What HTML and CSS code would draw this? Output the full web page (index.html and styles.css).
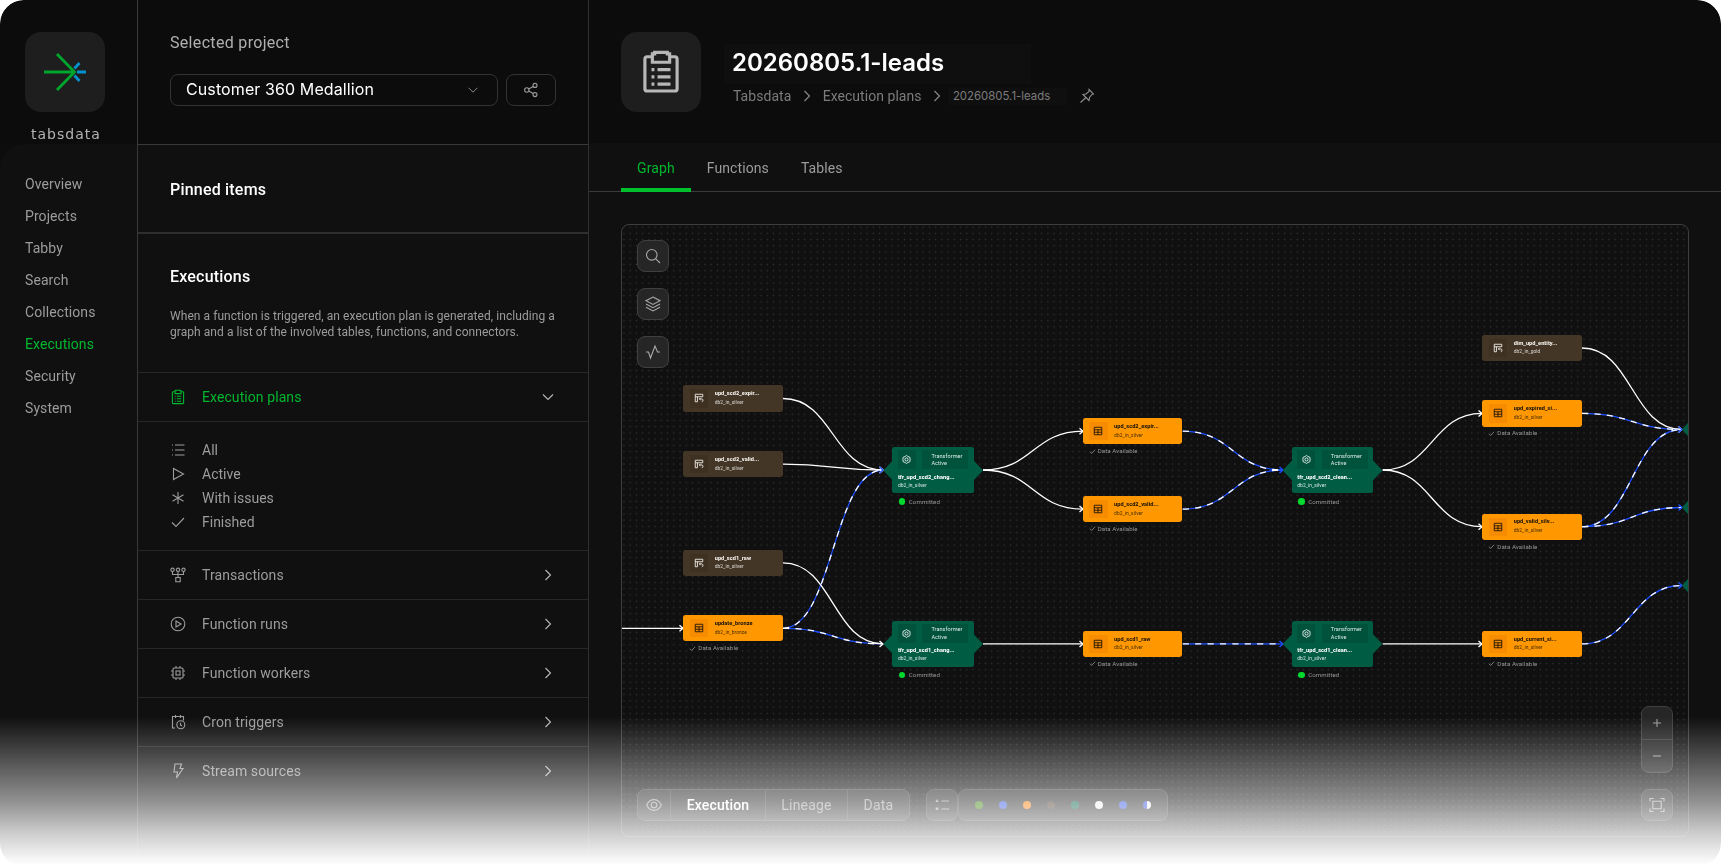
FILE: index.html
```html
<!DOCTYPE html>
<html lang="en">
<head>
  <meta charset="UTF-8" />
  <meta name="viewport" content="width=device-width, initial-scale=1.0"/>
  <title>Tabsdata - Execution plan</title>
  <link rel="stylesheet" href="styles.css">
</head>
<body>

  <!-- Icon set -->
  <svg class="icon-set" width="0" height="0">
    <symbol id="i-down" viewBox="0 0 16 16"><path d="M3 5.5l5 5 5-5"/></symbol>
    <symbol id="i-right" viewBox="0 0 16 16"><path d="M5.5 3l5 5-5 5"/></symbol>
    <symbol id="i-clipboard" viewBox="0 0 16 16"><path d="M5 2.700H3.200a.8.8 0 0 0-.8.8v10.300a.8.8 0 0 0 .8.8h9.600a.8.8 0 0 0 .8-.8V3.500a.8.8 0 0 0-.8-.8H11M5.800 1.200h4.400v.500h.800v2.900H5V1.700h.800zM4.700 7.200h1M6.800 7.200h4.500M4.700 9.700h1M6.800 9.700h4.500M4.700 12.200h1M6.800 12.200h4.500"/></symbol>
    <symbol id="i-list" viewBox="0 0 16 16"><path d="M2 3h1M5 3h9.500M2 8h1M5 8h9.500M2 13h1M5 13h9.500"/></symbol>
    <symbol id="i-play" viewBox="0 0 16 16"><path d="M3.500 2.500v11l10-5.500z"/></symbol>
    <symbol id="i-asterisk" viewBox="0 0 16 16"><path d="M8 2v12M2.500 4.800l11 6.400M2.500 11.200l11-6.400"/></symbol>
    <symbol id="i-check" viewBox="0 0 16 16"><path d="M2 8.500l4 4 8-8.500"/></symbol>
    <symbol id="i-fork" viewBox="0 0 16 16"><circle cx="2.500" cy="2.800" r="1.700"/><circle cx="8" cy="2.800" r="1.700"/><circle cx="13.500" cy="2.800" r="1.700"/><path d="M2.500 4.500v3h11v-3M8 4.500v6M5.800 10.500h4.400v4.300H5.800z"/></symbol>
    <symbol id="i-run" viewBox="0 0 16 16"><circle cx="8" cy="8" r="6.800"/><path d="M6 5v6l5-3z"/></symbol>
    <symbol id="i-chip" viewBox="0 0 16 16"><rect x="3" y="3" width="10" height="10" rx="1"/><rect x="6" y="6" width="4" height="4"/><path d="M6 1v2M10 1v2M6 13v2M10 13v2M1 6h2M1 10h2M13 6h2M13 10h2"/></symbol>
    <symbol id="i-cron" viewBox="0 0 16 16"><path d="M5 14H2.500V2.500h11v4M5.500 1v3M10.500 1v3M10.500 8.800v2.200l1.500 1"/><circle cx="10.800" cy="10.800" r="4"/></symbol>
    <symbol id="i-bolt" viewBox="0 0 16 16"><path d="M5 1h6.500L10 5.500h3L6.500 15l1-6H4z"/></symbol>
    <symbol id="i-share" viewBox="0 0 16 16"><circle cx="3.800" cy="8" r="2.200"/><circle cx="12" cy="3.400" r="2"/><circle cx="12" cy="12.600" r="2"/><path d="M5.700 7l4.500-2.600M5.700 9l4.500 2.600"/></symbol>
    <symbol id="i-pin" viewBox="0 0 16 16"><path d="M10 1.500l4.500 4.500-1.500.500-2.500 3-.500 3L4 6.500l3-.500 3-2.500zM7 9.500L1.500 14.500"/></symbol>
    <symbol id="i-search" viewBox="0 0 16 16"><circle cx="6.800" cy="6.800" r="5.300"/><path d="M10.600 10.600L15 15"/></symbol>
    <symbol id="i-layers" viewBox="0 0 16 16"><path d="M8 1l7 3.700-7 3.700-7-3.700zM1 8l7 3.700L15 8M1 11.300L8 15l7-3.700"/></symbol>
    <symbol id="i-activity" viewBox="0 0 16 16"><path d="M1 8h2.500l2 6 4.500-12 2.500 6H15"/></symbol>
    <symbol id="i-plus" viewBox="0 0 16 16"><path d="M8 4v8M4 8h8"/></symbol>
    <symbol id="i-minus" viewBox="0 0 16 16"><path d="M4 8h8"/></symbol>
    <symbol id="i-fit" viewBox="0 0 16 16"><path d="M1 4.500V1.500h3.500M11.500 1.500H15v3M15 11.500v3h-3.500M4.500 14.500H1v-3M3.800 4.300h8.400v7.400H3.800z"/></symbol>
    <symbol id="i-eye" viewBox="0 0 16 16"><path d="M.700 8C4 .800 12 .800 15.300 8 12 15.200 4 15.200.700 8z"/><circle cx="8" cy="8" r="2.800"/></symbol>
    <symbol id="i-legend" viewBox="0 0 16 16"><path d="M7.500 4H15M7.500 12H15"/><path class="solid" d="M3 2l1.700 3H1.300zM1.700 10.500h2.600v2.600H1.700z"/></symbol>
    <symbol id="i-table" viewBox="0 0 16 16"><path d="M2 2h12v12H2zM2 6h12M2 10h12M8 6v8"/></symbol>
    <symbol id="i-source" viewBox="0 0 16 16"><path d="M5.500 14H2V2h12v4M2 6h12M5.500 6v8M9 9.500h3.500c2.500 0 2.500 4.500 0 4.500M10.500 7.500l-2 2 2 2"/></symbol>
    <symbol id="i-hex" viewBox="0 0 16 16"><path d="M8 .8l2.200 1.700 3.900 1.700.3 3.800-.3 3.800-3.900 1.700L8 15.200l-2.200-1.700-3.900-1.700L1.600 8l.3-3.800 3.900-1.700z"/><circle cx="8" cy="8" r="2.800"/></symbol>
  </svg>

  <div class="app">

    <!-- Main navigation -->
    <aside class="sidebar">
      <div class="brand">
        <div class="tile">
          <svg width="80" height="80" viewBox="0 0 80 80" fill="none" stroke-width="2.800">
            <path d="M19 40h30M32 22l17.500 18L32 58" stroke="#00a52e"/>
            <path d="M49.500 36.500l5-5.500M52 40h9M49.500 43.500l5 5.500" stroke="#0093cf"/>
          </svg>
        </div>
        <span class="brand-name">tabsdata</span>
      </div>
      <nav class="menu">
        <a>Overview</a>
        <a>Projects</a>
        <a>Tabby</a>
        <a>Search</a>
        <a>Collections</a>
        <a class="active">Executions</a>
        <a>Security</a>
        <a>System</a>
      </nav>
    </aside>

    <!-- Project panel -->
    <section class="panel">
      <div class="project">
        <div class="project-label">Selected project</div>
        <div class="project-row">
          <div class="select"><span>Customer 360 Medallion</span><svg class="icon"><use href="#i-down"/></svg></div>
          <div class="share"><svg class="icon"><use href="#i-share"/></svg></div>
        </div>
      </div>
      <div class="pinned"><h2>Pinned items</h2></div>
      <div class="intro">
        <h2>Executions</h2>
        <p>When a function is triggered, an execution plan is generated, including a<br>graph and a list of the involved tables, functions, and connectors.</p>
      </div>
      <div class="row open"><svg class="icon"><use href="#i-clipboard"/></svg><span>Execution plans</span><svg class="icon arrow"><use href="#i-down"/></svg></div>
      <ul class="filters">
        <li><svg class="icon"><use href="#i-list"/></svg>All</li>
        <li><svg class="icon"><use href="#i-play"/></svg>Active</li>
        <li><svg class="icon"><use href="#i-asterisk"/></svg>With issues</li>
        <li><svg class="icon"><use href="#i-check"/></svg>Finished</li>
      </ul>
      <div class="row"><svg class="icon"><use href="#i-fork"/></svg><span>Transactions</span><svg class="icon arrow"><use href="#i-right"/></svg></div>
      <div class="row"><svg class="icon"><use href="#i-run"/></svg><span>Function runs</span><svg class="icon arrow"><use href="#i-right"/></svg></div>
      <div class="row"><svg class="icon"><use href="#i-chip"/></svg><span>Function workers</span><svg class="icon arrow"><use href="#i-right"/></svg></div>
      <div class="row"><svg class="icon"><use href="#i-cron"/></svg><span>Cron triggers</span><svg class="icon arrow"><use href="#i-right"/></svg></div>
      <div class="row"><svg class="icon"><use href="#i-bolt"/></svg><span>Stream sources</span><svg class="icon arrow"><use href="#i-right"/></svg></div>
    </section>

    <!-- Content -->
    <main class="content">
      <header class="page-header">
        <div class="tile"><svg class="icon"><use href="#i-clipboard"/></svg></div>
        <div class="heading">
          <h1>20260805.1-leads</h1>
          <div class="crumbs">
            <span>Tabsdata</span>
            <svg class="icon"><use href="#i-right"/></svg>
            <span>Execution plans</span>
            <svg class="icon"><use href="#i-right"/></svg>
            <span class="current">20260805.1-leads</span>
            <svg class="icon pin"><use href="#i-pin"/></svg>
          </div>
        </div>
      </header>

      <div class="tabs">
        <a class="tab active">Graph</a>
        <a class="tab">Functions</a>
        <a class="tab">Tables</a>
      </div>

      <div class="canvas">
        <!-- Edges -->
        <svg class="edges" width="1066" height="610" viewBox="0 0 1066 610">
          <defs>
            <marker id="head" markerUnits="userSpaceOnUse" markerWidth="8" markerHeight="8" refX="5" refY="4" orient="auto"><path d="M1.500 1L5 4 1.500 7" fill="none" stroke="#fff" stroke-width="1.300"/></marker>
            <marker id="head-blue" markerUnits="userSpaceOnUse" markerWidth="8" markerHeight="8" refX="5" refY="4" orient="auto"><path d="M1.500 1L5 4 1.500 7" fill="none" stroke="#1d4fff" stroke-width="1.300"/></marker>
            <path id="e1" d="M161 403.300C211 403.300 211 245 261 245"/>
            <path id="e2" d="M161 403.300C211 403.300 211 418.900 261 418.900"/>
            <path id="e3" d="M560.700 206.200C611 206.200 611 245 661 245"/>
            <path id="e4" d="M560.700 284.100C611 284.100 611 245 661 245"/>
            <path id="e5" d="M560.700 418.900H661"/>
            <path id="e6" d="M960 188.400C1010 188.400 1010 204.500 1060 204.500"/>
            <path id="e7" d="M960 301.700C1010 301.700 1010 204.500 1060 204.500"/>
            <path id="e8" d="M960 301.700C1010 301.700 1010 282.500 1060 282.500"/>
            <path id="e9" d="M960 418.900C1010 418.900 1010 360.500 1060 360.500"/>
          </defs>
          <g class="edge blue">
            <use href="#e1"/><use href="#e2"/><use href="#e3"/><use href="#e4"/><use href="#e5"/><use href="#e6"/><use href="#e7"/><use href="#e8"/><use href="#e9"/>
          </g>
          <g class="edge dashed">
            <use href="#e1"/><use href="#e2"/><use href="#e3"/><use href="#e4"/><use href="#e5"/><use href="#e6"/><use href="#e7"/><use href="#e8"/><use href="#e9"/>
          </g>
          <g class="edge" marker-end="url(#head)">
            <path d="M0 403.300H61"/>
            <path d="M161 173.500C211 173.500 211 245 261 245"/>
            <path d="M161 239.200C211 239.200 211 245 261 245"/>
            <path d="M161 337.900C211 337.900 211 418.900 261 418.900"/>
            <path d="M361 245C411 245 411 206.200 461 206.200"/>
            <path d="M361 245C411 245 411 284.100 461 284.100"/>
            <path d="M361 418.900H461"/>
            <path d="M760.700 245C810 245 810 188.400 860 188.400"/>
            <path d="M760.700 245C810 245 810 301.700 860 301.700"/>
            <path d="M760.700 418.900H860"/>
            <path d="M960 123C1010 123 1010 204.500 1060 204.500"/>
          </g>
          <g fill="none" marker-end="url(#head-blue)">
            <path d="M260 245h1"/><path d="M660 245h1"/><path d="M660 418.900h1"/><path d="M1059 204.500h1"/><path d="M1059 282.500h1"/><path d="M1059 360.500h1"/>
          </g>
          <path d="M1060 204.500l7-8v16zM1060 282.500l7-8v16zM1060 360.500l7-8v16z" fill="#005c43"/>
        </svg>

        <!-- Nodes -->
        <div class="node source" id="n1"><i><svg class="icon"><use href="#i-source"/></svg></i><div><b>upd_scd2_expir...</b><small>db2_in_silver</small></div></div>
        <div class="node source" id="n2"><i><svg class="icon"><use href="#i-source"/></svg></i><div><b>upd_scd2_valid...</b><small>db2_in_silver</small></div></div>
        <div class="node source" id="n3"><i><svg class="icon"><use href="#i-source"/></svg></i><div><b>upd_scd1_raw</b><small>db2_in_silver</small></div></div>
        <div class="node table" id="n4"><i><svg class="icon"><use href="#i-table"/></svg></i><div><b>update_bronze</b><small>db2_in_bronze</small></div><span class="state"><svg class="icon"><use href="#i-check"/></svg>Data Available</span></div>

        <div class="transformer" id="t1">
          <div class="kind"><i><svg class="icon"><use href="#i-hex"/></svg></i><p>Transformer<br>Active</p></div>
          <b>tfr_upd_scd2_chang...</b><small>db2_in_silver</small>
          <span class="state">Committed</span>
        </div>
        <div class="transformer" id="t2">
          <div class="kind"><i><svg class="icon"><use href="#i-hex"/></svg></i><p>Transformer<br>Active</p></div>
          <b>tfr_upd_scd1_chang...</b><small>db2_in_silver</small>
          <span class="state">Committed</span>
        </div>

        <div class="node table" id="n5"><i><svg class="icon"><use href="#i-table"/></svg></i><div><b>upd_scd2_expir...</b><small>db2_in_silver</small></div><span class="state"><svg class="icon"><use href="#i-check"/></svg>Data Available</span></div>
        <div class="node table" id="n6"><i><svg class="icon"><use href="#i-table"/></svg></i><div><b>upd_scd2_valid...</b><small>db2_in_silver</small></div><span class="state"><svg class="icon"><use href="#i-check"/></svg>Data Available</span></div>
        <div class="node table" id="n7"><i><svg class="icon"><use href="#i-table"/></svg></i><div><b>upd_scd1_raw</b><small>db2_in_silver</small></div><span class="state"><svg class="icon"><use href="#i-check"/></svg>Data Available</span></div>

        <div class="transformer" id="t3">
          <div class="kind"><i><svg class="icon"><use href="#i-hex"/></svg></i><p>Transformer<br>Active</p></div>
          <b>tfr_upd_scd2_clean...</b><small>db2_in_silver</small>
          <span class="state">Committed</span>
        </div>
        <div class="transformer" id="t4">
          <div class="kind"><i><svg class="icon"><use href="#i-hex"/></svg></i><p>Transformer<br>Active</p></div>
          <b>tfr_upd_scd1_clean...</b><small>db2_in_silver</small>
          <span class="state">Committed</span>
        </div>

        <div class="node source" id="n8"><i><svg class="icon"><use href="#i-source"/></svg></i><div><b>dim_upd_entity...</b><small>db2_in_gold</small></div></div>
        <div class="node table" id="n9"><i><svg class="icon"><use href="#i-table"/></svg></i><div><b>upd_expired_si...</b><small>db2_in_silver</small></div><span class="state"><svg class="icon"><use href="#i-check"/></svg>Data Available</span></div>
        <div class="node table" id="n10"><i><svg class="icon"><use href="#i-table"/></svg></i><div><b>upd_valid_silv...</b><small>db2_in_silver</small></div><span class="state"><svg class="icon"><use href="#i-check"/></svg>Data Available</span></div>
        <div class="node table" id="n11"><i><svg class="icon"><use href="#i-table"/></svg></i><div><b>upd_current_si...</b><small>db2_in_silver</small></div><span class="state"><svg class="icon"><use href="#i-check"/></svg>Data Available</span></div>

        <!-- Canvas controls -->
        <div class="tools">
          <button><svg class="icon"><use href="#i-search"/></svg></button>
          <button><svg class="icon"><use href="#i-layers"/></svg></button>
          <button><svg class="icon"><use href="#i-activity"/></svg></button>
        </div>
        <div class="bottom-bar">
          <div class="group modes">
            <span class="eye"><svg class="icon"><use href="#i-eye"/></svg></span>
            <span class="mode-execution">Execution</span>
            <span class="mode-lineage">Lineage</span>
            <span class="mode-data">Data</span>
          </div>
          <div class="group legend-button"><svg class="icon"><use href="#i-legend"/></svg></div>
          <div class="group legend">
            <i class="dot green"></i><i class="dot blue"></i><i class="dot orange"></i><i class="dot brown"></i>
            <i class="dot teal"></i><i class="dot white"></i><i class="dot blue"></i><i class="dot half"></i>
          </div>
        </div>
        <div class="zoom">
          <div class="group zoom-level">
            <span><svg class="icon"><use href="#i-plus"/></svg></span>
            <span><svg class="icon"><use href="#i-minus"/></svg></span>
          </div>
          <button><svg class="icon"><use href="#i-fit"/></svg></button>
        </div>
      </div>
    </main>
  </div>

</body>
</html>
```
FILE: styles.css
```css
* { box-sizing: border-box; }
body { margin: 0; background: #fff; font-family: Roboto, "Noto Sans", sans-serif; font-size: 14px; color: #9c9c9c; overflow: hidden; }
h1, h2, p, ul { margin: 0; padding: 0; }
i { font-style: normal; }

.icon-set { position: absolute; }
.icon { width: 16px; height: 16px; fill: none; stroke: currentColor; stroke-width: 1.1; flex: none; }
.solid { fill: currentColor; stroke: none; }
.tile { width: 80px; height: 80px; border-radius: 16px; background: #1e1e1e; display: flex; align-items: center; justify-content: center; }

/* the page fades out towards the bottom */
.app { display: grid; grid-template-columns: 138px 451px 1fr; height: 867px; background: #101010; border-radius: 24px; overflow: hidden; mask-image: linear-gradient(#000 717px, rgba(0, 0, 0, 0.47) 800px, rgba(0, 0, 0, 0.21) 833px, transparent 865px); }

/* sidebar */
.sidebar { background: #0c0c0c; border-right: 1px solid #393939; display: flex; flex-direction: column; }
.brand { height: 144px; padding: 32px 0 0 25px; }
.brand-name { display: block; margin: 13px 0 0 6px; font-family: "DejaVu Sans", sans-serif; font-size: 14px; line-height: 18px; letter-spacing: 1px; color: #b4b4b4; }
.menu { flex: 1; display: flex; flex-direction: column; padding: 24px 0 0 25px; background: #101010; border-top-left-radius: 24px; }
.menu a { height: 32px; line-height: 33px; letter-spacing: 0.08px; }
.menu .active { color: #00b82e; }

/* project panel */
.panel { border-right: 1px solid #303030; }
.project { height: 145px; padding: 33px 32px 0; background: #0c0c0c; border-bottom: 1px solid #393939; }
.project-label { font-size: 16px; line-height: 20px; letter-spacing: 0.32px; color: #b0b0b0; }
.project-row { display: flex; gap: 8px; margin-top: 21px; }
.select { width: 328px; height: 32px; padding: 0 17px 1px 15px; border: 1px solid #333; border-radius: 8px; display: flex; align-items: center; justify-content: space-between; font-family: Inter, sans-serif; font-size: 16px; letter-spacing: 0.1px; color: #fff; }
.select span { padding-bottom: 1px; }
.select .icon { color: #8c8c8c; width: 14px; height: 14px; }
.share { width: 50px; height: 32px; border: 1px solid #333; border-radius: 8px; display: flex; align-items: center; justify-content: center; }
.pinned { height: 89px; padding: 35px 32px 0; border-bottom: 2px solid #2e2e2e; }
h2 { font-size: 16px; line-height: 20px; font-weight: 500; letter-spacing: 0.2px; color: #fff; }
.intro { height: 139px; padding: 33px 32px 0; border-bottom: 1px solid #272727; }
.intro p { margin-top: 21px; font-size: 12px; line-height: 16px; letter-spacing: 0.06px; white-space: nowrap; }
.row { height: 49px; padding: 0 32px; border-bottom: 1px solid #272727; display: flex; align-items: center; letter-spacing: 0.08px; }
.row:last-child { height: 48px; border-bottom: none; }
.row span { margin-left: 16px; flex: 1; }
.row .arrow { color: #b8b8b8; }
.open { color: #00b82e; }
.filters { list-style: none; height: 129px; padding: 16px 32px 0; border-bottom: 1px solid #272727; }
.filters li { display: flex; align-items: center; gap: 16px; height: 24px; letter-spacing: 0; }

/* page header */
.page-header { height: 143px; padding: 32px 32px 0; background: #0c0c0c; display: flex; }
.page-header .tile .icon { width: 46px; height: 46px; color: #b8b8b8; }
.heading { padding: 12px 0 0 23px; }
h1 { width: 307px; height: 40px; padding-left: 8px; background: #0f0f0f; font-family: Inter, sans-serif; font-size: 24px; line-height: 38px; font-weight: 600; color: #fff; }
.crumbs { display: flex; align-items: center; height: 24px; padding-left: 9px; letter-spacing: 0.04px; color: #7c7c7c; }
.crumbs .icon { width: 16px; height: 16px; margin: 0 7.7px; color: #8c8c8c; }
.crumbs .current { width: 119px; height: 17px; line-height: 17px; margin-left: -5px; padding-left: 5px; background: #0f0f0f; font-family: Inter, sans-serif; font-size: 11.4px; letter-spacing: 0; }
.crumbs .pin { margin-left: 12px; }

/* tabs */
.tabs { height: 49px; padding-left: 32px; border-bottom: 1px solid #3a3a3a; display: flex; }
.tab { padding: 0 16px; line-height: 51px; height: 49px; letter-spacing: 0.1px; }
.tab.active { color: #00b82e; border-bottom: 4px solid #00c02e; }

/* graph canvas */
.canvas { position: relative; width: 1068px; height: 613px; margin: 32px 0 0 32px; border: 1px solid #3e3e3e; border-radius: 8px; overflow: hidden; background: radial-gradient(circle at 50% 50%, #313131 0.5px, transparent 1.05px) -1.2px -1px / 6.24px 6.24px; }
.edges { position: absolute; left: 0; top: 0; }
.edge { fill: none; stroke: #fff; stroke-width: 1.3; }
.edge.blue { stroke: #1d4fff; }
.edge.dashed { stroke-dasharray: 6.2 6.2; }

.node { position: absolute; width: 99.7px; height: 26.4px; border-radius: 2.4px; padding: 0 6.5px; display: flex; align-items: center; }
.node i { width: 18.4px; height: 18.4px; margin-right: 6.5px; border-radius: 1px; display: flex; align-items: center; justify-content: center; }
.node .icon { width: 10px; height: 10px; stroke-width: 1.4; }
.node b, .node small, .transformer b, .transformer small { display: block; font-size: 5.6px; line-height: 8.8px; font-weight: 800; letter-spacing: 0.06px; white-space: nowrap; }
.node small, .transformer small { font-size: 4.9px; font-weight: 400; opacity: 0.85; }
.node div { margin-top: -1px; }
.source { background: #433626; color: #f4f1ec; }
.source i { background: #3e3122; }
.table { background: #ff9800; color: #1c1408; }
.table i { background: #f78c00; }
.state { position: absolute; left: 15px; top: 28px; font-size: 6.1px; line-height: 9px; letter-spacing: 0.1px; color: #989898; white-space: nowrap; }
.node .state .icon { position: absolute; left: -9px; top: 1.5px; width: 7px; height: 7px; stroke-width: 1.8; }

.transformer { position: absolute; z-index: 0; width: 99.7px; height: 46px; padding: 3px 14.6px; color: #fff; }
.transformer::before { content: ""; position: absolute; inset: 0 9.2px; background: #005c43; border-radius: 2px; z-index: -1; }
.transformer::after { content: ""; position: absolute; inset: 0; background: #005c43; clip-path: polygon(0 50%, 10% 27%, 90% 27%, 100% 50%, 90% 73%, 10% 73%); z-index: -1; }
.kind { display: flex; gap: 6.4px; height: 18.5px; margin-bottom: 3.7px; }
.kind i { width: 18.4px; background: #00523b; display: flex; align-items: center; justify-content: center; }
.kind .icon { width: 9px; height: 9px; stroke-width: 1.5; }
.kind p { width: 47px; padding: 2.4px 0 0 9.2px; background: #00523b; font-size: 5.5px; line-height: 7.4px; letter-spacing: 0.08px; color: #dcebe6; }
.transformer b { line-height: 8px; }
.transformer small { line-height: 8px; }
.transformer .state { left: 25.5px; top: 49.3px; }
.transformer .state::before { content: ""; position: absolute; left: -10px; top: 1.5px; width: 6.4px; height: 6.4px; border-radius: 50%; background: #00d92e; }

/* node positions on the canvas */
#n1 { left: 61.3px; top: 160.3px; }
#n2 { left: 61.3px; top: 226px; }
#n3 { left: 61.3px; top: 324.7px; }
#n4 { left: 61.3px; top: 390.1px; }
#t1 { left: 261.3px; top: 222.4px; }
#t2 { left: 261.3px; top: 396px; }
#n5 { left: 460.7px; top: 193px; }
#n6 { left: 460.7px; top: 270.9px; }
#n7 { left: 460.7px; top: 405.7px; }
#t3 { left: 660.7px; top: 222.4px; }
#t4 { left: 660.7px; top: 396px; }
#n8 { left: 860.3px; top: 109.8px; }
#n9 { left: 860.3px; top: 175.2px; }
#n10 { left: 860.3px; top: 288.5px; }
#n11 { left: 860.3px; top: 405.7px; }

/* controls over the canvas */
button { width: 32px; height: 32px; padding: 0; border: 1px solid #404040; border-radius: 8px; background: #262626; color: #a8a8a8; display: flex; align-items: center; justify-content: center; }
.group { border: 1px solid #404040; border-radius: 8px; background: #262626; display: flex; height: 32px; }
.tools { position: absolute; left: 15px; top: 15px; display: flex; flex-direction: column; gap: 16px; }
.bottom-bar { position: absolute; left: 15px; bottom: 15px; display: flex; }
.modes span { display: flex; align-items: center; justify-content: center; padding-bottom: 1px; border-right: 1px solid #404040; letter-spacing: 0.2px; }
.modes span:last-child { border-right: none; }
.modes .eye { width: 33px; padding-bottom: 0; }
.modes .mode-execution { width: 95px; color: #fff; font-weight: 500; letter-spacing: 0.1px; }
.modes .mode-lineage { width: 82px; }
.modes .mode-data { width: 61px; }
.legend-button { width: 32px; margin-left: 16px; align-items: center; justify-content: center; }
.legend { width: 210px; padding: 0 16px; align-items: center; justify-content: space-between; }
.dot { width: 8px; height: 8px; border-radius: 50%; }
.green { background: #387d06; }
.dot.blue { background: #2a4ddb; }
.orange { background: #f57a00; }
.brown { background: #433626; }
.teal { background: #005c43; }
.white { background: #f0f0f0; }
.half { background: linear-gradient(90deg, #2a4ddb 50%, #f0f0f0 50%); }
.zoom { position: absolute; right: 15px; bottom: 15px; display: flex; flex-direction: column; gap: 16px; }
.zoom-level { flex-direction: column; height: 67px; width: 32px; }
.zoom-level span { flex: 1; display: flex; align-items: center; justify-content: center; }
.zoom-level span + span { border-top: 1px solid #404040; }
```
